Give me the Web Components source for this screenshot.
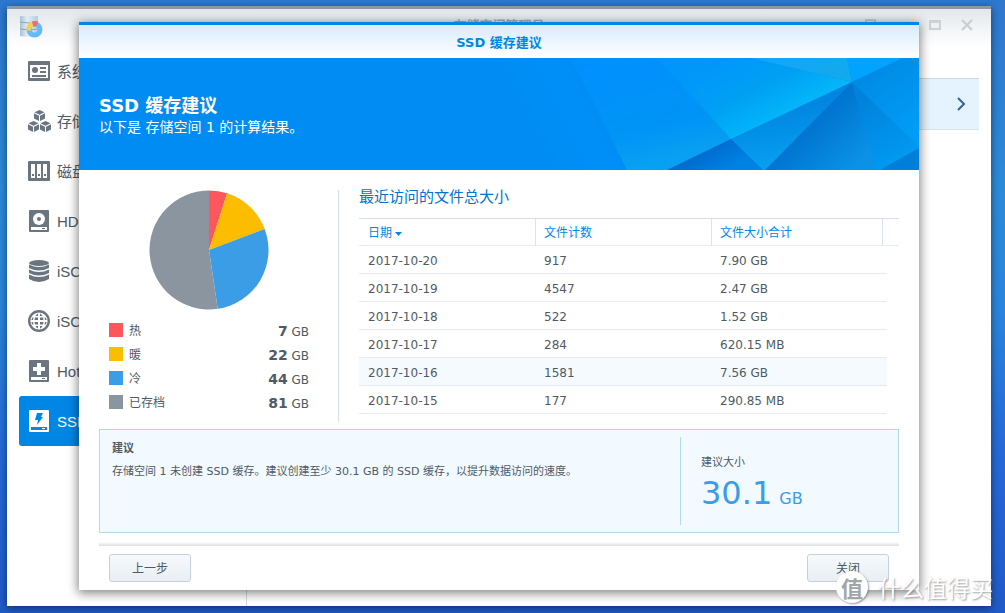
<!DOCTYPE html>
<html lang="zh-CN">
<head>
<meta charset="utf-8">
<title>存储空间管理员</title>
<style>
  html { height: 100%; }
  body {
    margin: 0;
    min-height: 100%;
    display: grid;
    font: 12px/20px "DejaVu Sans", "Noto Sans CJK SC", sans-serif;
    color: #505a64;
  }
</style>
</head>
<body>
<dsm-desktop>
  <dsm-window heading="存储空间管理员">
    <dsm-nav slot="nav">
      <dsm-nav-item icon="overview">系统</dsm-nav-item>
      <dsm-nav-item icon="volume">存储</dsm-nav-item>
      <dsm-nav-item icon="raid">磁盘</dsm-nav-item>
      <dsm-nav-item icon="hdd">HDD</dsm-nav-item>
      <dsm-nav-item icon="lun">iSCSI</dsm-nav-item>
      <dsm-nav-item icon="target">iSCSI</dsm-nav-item>
      <dsm-nav-item icon="spare">Hot</dsm-nav-item>
      <dsm-nav-item icon="cache" active>SSD</dsm-nav-item>
    </dsm-nav>
    <dsm-dialog slot="dialog" heading="SSD 缓存建议">
      <dsm-banner heading="SSD 缓存建议">以下是 存储空间 1 的计算结果。</dsm-banner>
      <usage-summary></usage-summary>
      <cache-advice heading="建议" label="建议大小" value="30.1" unit="GB">存储空间 1 未创建 SSD 缓存。建议创建至少 30.1 GB 的 SSD 缓存，以提升数据访问的速度。</cache-advice>
      <dsm-button slot="actions">上一步</dsm-button>
      <dsm-button slot="actions">关闭</dsm-button>
    </dsm-dialog>
  </dsm-window>
  <site-mark slot="mark"></site-mark>
</dsm-desktop>

<script>
const define = (name, render) => customElements.define(name, class extends HTMLElement {
  constructor() {
    super();
    this.attachShadow({ mode: 'open' });
  }
  connectedCallback() {
    if (this.shadowRoot.childNodes.length) return;
    const t = document.createElement('template');
    t.innerHTML = render(this);
    this.shadowRoot.append(t.content.cloneNode(true));
  }
});

define('dsm-desktop', () => `
  <style>
    :host {
      display: grid;
      position: relative;
      box-sizing: border-box;
      padding: 6px 14px 7px 7px;
      background: linear-gradient(180deg, #2f78cf 0%, #2c8bd9 30%, #2a86dc 50%, #2569d8 75%, #1f5bc9 100%);
    }
  </style>
  <slot></slot><slot name="mark"></slot>`);

define('dsm-window', el => `
  <style>
    :host {
      display: grid;
      background: #fff;
      box-shadow: 0 2px 8px rgba(0, 0, 0, .5);
    }
    .app, ::slotted([slot=dialog]) { grid-area: 1 / 1; }
    .app { display: grid; grid-template-rows: auto 1fr; min-width: 0; }
    header {
      display: grid;
      grid-template-columns: 1fr auto 1fr;
      box-sizing: border-box;
      height: 40px;
      padding: 0 12px;
      border-top: 3px solid #8b98a5;
      background: linear-gradient(#e3e7eb, #fff);
      align-items: center;
    }
    h1 { margin: 0; padding-bottom: 4px; font-size: 13px; line-height: 20px; color: #a9afb5; font-weight: bold; }
    .controls { display: flex; justify-content: end; gap: 8px; padding-bottom: 6px; }
    .controls button { width: 24px; height: 24px; padding: 0; border: 0; background: none; display: grid; place-items: center; }
    .body { display: grid; grid-template-columns: 240px 1fr; }
    nav { border-right: 1px solid #d5d8db; }
    main { padding: 32px 12px 0 20px; }
    .volume {
      display: flex; width: 100%; height: 52px; box-sizing: border-box;
      align-items: center; justify-content: flex-end; padding: 0 12px 0 0;
      background: #e5f3fe; border: 0; border-top: 1px solid #c8d8e4; border-bottom: 1px solid #d6e4ee;
    }
    svg { display: block; }
  </style>
  <div class="app">
    <header>
      <svg width="24" height="24" viewBox="0 0 24 24" aria-hidden="true">
        <defs><linearGradient id="d"><stop stop-color="#a8c2d4"/><stop offset=".4" stop-color="#e2edf4"/><stop offset="1" stop-color="#b6cad8"/></linearGradient></defs>
        <path d="M1 0h18v19q-9 3-18 1z" fill="url(#d)"/>
        <path d="M1 6q9 2 18 0M1 13q9 2 18 0" stroke="#8fa5b5" fill="none"/>
        <circle cx="15.500" cy="13.500" r="5.500" fill="none" stroke="#62bdf6" stroke-width="5"/>
        <path d="M7.500 14.500A8 8 0 0 1 13 5.500l1.500 5a3 3 0 0 0-2.500 4z" fill="#f8cf55"/>
        <path d="M13 5.500a8 8 0 0 1 6 0l-2 5a4 4 0 0 0-2.500 0z" fill="#ef6a6f"/>
      </svg>
      <h1>${el.getAttribute('heading')}</h1>
      <div class="controls">
        <button aria-label="帮助"><svg width="12" height="12" fill="none" stroke="#c8cccf" stroke-width="2"><path d="M1 4V1h9v4H6v3M6 10v2"/></svg></button>
        <button aria-label="最小化"><svg width="12" height="12"><path d="M0 9h12v2H0z" fill="#c8cccf"/></svg></button>
        <button aria-label="最大化"><svg width="12" height="12"><path d="M0 1h12v10H0z" fill="#cdd1d4"/><path d="M2 4h8v5H2z" fill="#eef0f2"/></svg></button>
        <button aria-label="关闭窗口"><svg width="12" height="12" stroke="#c8cccf" stroke-width="2"><path d="M1 1l10 10M11 1L1 11"/></svg></button>
      </div>
    </header>
    <div class="body">
      <nav><slot name="nav"></slot></nav>
      <main><button class="volume" aria-label="展开"><svg width="12" height="14" fill="none" stroke="#35639a" stroke-width="2"><path d="M3 1l6 6-6 6"/></svg></button></main>
    </div>
  </div>
  <slot name="dialog"></slot>`);

define('dsm-nav', () => `
  <style>:host { display: grid; padding: 0 12px; }</style><slot></slot>`);

const icons = {
  overview: '<path fill="currentColor" fill-rule="evenodd" d="M1 1h20q1 0 1 1v18q0 1-1 1H1q-1 0-1-1V2q0-1 1-1zm1 4v13h18V5z"/><g fill="currentColor"><circle cx="7" cy="10" r="3"/><path d="M12 7h6v2h-6zM12 11h6v2h-6zM4 15h14v2H4z"/></g>',
  volume: '<g fill="currentColor"><path d="M11.500 0l5 2.300-5 2.400-5-2.400zM6 3.300l5 2.400V11l-5-2.500zM17 3.300l-5 2.400V11l5-2.500z"/><path d="M5.500 11l5 2.300-5 2.400-5-2.400zM0 14.300l5 2.400V22l-5-2.500zM11 14.300l-5 2.400V22l5-2.500z"/><path d="M17.500 11l5 2.300-5 2.400-5-2.400zM12 14.300l5 2.400V22l-5-2.500zM23 14.300l-5 2.400V22l5-2.500z"/></g>',
  raid: '<path fill="currentColor" d="M1 1h20q1 0 1 1v18q0 1-1 1H1q-1 0-1-1V2q0-1 1-1z"/><path fill="#fff" d="M3 4h4v14H3zM9 4h4v14H9zM15 4h4v14h-4z"/><path fill="currentColor" d="M4 14h2v2H4zM10 14h2v2h-2zM16 14h2v2h-2z"/>',
  hdd: '<path fill="currentColor" d="M2 0h18q1 0 1 1v20q0 1-1 1H2q-1 0-1-1V1q0-1 1-1z"/><circle cx="11" cy="9" r="6" fill="#fff"/><circle cx="11" cy="9" r="2" fill="currentColor"/><path fill="#fff" d="M3 17h16v3H3z"/><path fill="currentColor" d="M14 18h3v1h-3z"/>',
  lun: '<g fill="currentColor"><ellipse cx="11" cy="3" rx="10" ry="3"/><path d="M1 4.500q10 5 20 0V8q-10 5-20 0zM1 9.500q10 5 20 0V13q-10 5-20 0zM1 14.500q10 5 20 0V19q-10 6-20 0z"/></g>',
  target: '<circle cx="11" cy="11" r="9.800" fill="none" stroke="currentColor" stroke-width="2.400"/><circle cx="11" cy="11" r="8" fill="#fff"/><g fill="currentColor"><path d="M10 3.500V6H7.500Q8.500 4 10 3.500zM12 3.500V6h2.500Q13.500 4 12 3.500zM10 18.500V16H7.500q1 2 2.500 2.500zM12 18.500V16h2.500q-1 2-2.500 2.500zM7 7.500h3V10H6.500zM12 7.500h3l.5 2.500H12zM6.500 12H10v2.500H7zM12 12h3.500l-.5 2.500h-3zM3.500 10q0-1.500.8-2.500h1.200L5 10zM18.500 10q0-1.500-.8-2.500h-1.200L17 10zM3.500 12q0 1.500.8 2.500h1.200L5 12zM18.500 12q0 1.500-.8 2.500h-1.200L17 12z"/></g>',
  spare: '<path fill="currentColor" d="M2 0h18q1 0 1 1v20q0 1-1 1H2q-1 0-1-1V1q0-1 1-1z"/><path fill="#fff" d="M9 3h4v4h4v4h-4v4H9v-4H5V7h4zM3 17h16v3H3z"/><path fill="currentColor" d="M14 18h3v1h-3z"/>',
  cache: '<path fill="#fff" d="M2 0h18q1 0 1 1v20q0 1-1 1H2q-1 0-1-1V1q0-1 1-1z"/><path fill="#0086e5" d="M9 3h6l-2 4h2l-6 8 1-5H7zM3 17h16v3H3z"/><path fill="#fff" d="M14 18h3v1h-3z"/>'
};
define('dsm-nav-item', el => `
  <style>
    :host { display: block; }
    a {
      display: flex; align-items: center; gap: 7px; height: 50px; padding: 0 9px;
      font: 15px/20px "Liberation Sans", "Noto Sans CJK SC", sans-serif;
      color: #505a64; text-decoration: none; border-radius: 3px; white-space: nowrap;
    }
    svg { color: #6b7580; flex: none; overflow: visible; }
    span { padding-top: 2px; }
    :host([active]) a { background: #0086e5; color: #fff; }
  </style>
  <a href="#${el.getAttribute('icon')}"><svg width="22" height="22" viewBox="0 0 22 22" aria-hidden="true">${icons[el.getAttribute('icon')]}</svg><span><slot></slot></span></a>`);

define('dsm-dialog', el => `
  <style>
    :host {
      display: block;
      place-self: center;
      width: calc(100% - 144px);
      background: #fff;
      z-index: 1;
      box-shadow: 0 2px 10px 1px rgba(0, 0, 0, .5);
    }
    header {
      box-sizing: border-box; height: 36px; border-top: 3px solid #0086e5;
      background: linear-gradient(#d8ebfc, #fff);
      display: grid; place-items: center;
    }
    h2 { margin: 0; padding-top: 2px; font-size: 13px; line-height: 20px; color: #0086e5; }
    footer {
      display: flex; justify-content: space-between; margin: 8px 20px 0; padding: 13px 10px 8px;
      background: linear-gradient(#fff, #dcdddf) 0 1px / 100% 4px no-repeat;
    }
  </style>
  <header><h2>${el.getAttribute('heading')}</h2></header>
  <slot></slot>
  <footer><slot name="actions"></slot></footer>`);

define('dsm-banner', el => `
  <style>
    :host {
      display: grid; grid-template-columns: 1fr 420px; height: 112px; overflow: hidden;
      background: #008cf2; color: #fff;
    }
    .text { padding: 37px 0 0 20px; white-space: nowrap; }
    h3 { margin: 0; font-size: 18px; line-height: 21px; }
    p { margin: 0; font-size: 14px; line-height: 22px; }
    svg { display: block; }
  </style>
  <div class="text"><h3>${el.getAttribute('heading')}</h3><p><slot></slot></p></div>
  <svg width="420" height="112" viewBox="0 0 420 112" aria-hidden="true">
    <defs>
      <linearGradient id="a" gradientUnits="userSpaceOnUse" x1="0" y1="0" x2="92" y2="-46"><stop stop-color="#008cf2"/><stop offset=".2" stop-color="#008ef6"/><stop offset=".5" stop-color="#008ff8"/><stop offset="1" stop-color="#0088ec"/></linearGradient>
      <linearGradient id="b" x2=".3" y2="1"><stop stop-color="#0090ff"/><stop offset=".7" stop-color="#0094f6"/><stop offset="1" stop-color="#08a0f2"/></linearGradient>
      <linearGradient id="c" gradientUnits="userSpaceOnUse" x1="220" y1="0" x2="262" y2="80"><stop stop-color="#0096fa"/><stop offset=".5" stop-color="#00a0f4"/><stop offset="1" stop-color="#04bcfa"/></linearGradient>
      <linearGradient id="e"><stop stop-color="#14a4fc"/><stop offset="1" stop-color="#12aaec"/></linearGradient>
      <linearGradient id="f" x2=".6" y2="1"><stop stop-color="#0086e0"/><stop offset="1" stop-color="#009cf6"/></linearGradient>
      <linearGradient id="g" gradientUnits="userSpaceOnUse" x1="280" y1="50" x2="290" y2="112"><stop stop-color="#0086e2"/><stop offset="1" stop-color="#08a2f2"/></linearGradient>
      <linearGradient id="h" gradientUnits="userSpaceOnUse" x1="215" y1="88" x2="230" y2="112"><stop stop-color="#006cd0"/><stop offset="1" stop-color="#0082e4"/></linearGradient>
      <linearGradient id="i" gradientUnits="userSpaceOnUse" x1="310" y1="68" x2="352" y2="112"><stop stop-color="#0074d0"/><stop offset="1" stop-color="#0a92e6"/></linearGradient>
      <linearGradient id="j" gradientUnits="userSpaceOnUse" x1="360" y1="40" x2="400" y2="112"><stop stop-color="#0082dc"/><stop offset="1" stop-color="#009cf4"/></linearGradient>
    </defs>
    <path d="M0 0h72l56 112H0z" fill="url(#a)"/>
    <path d="M72 0h88l72 81-64 31h-40z" fill="url(#b)"/>
    <path d="M158 0h94l101 24-121 57z" fill="url(#c)"/>
    <path d="M252 0h96l5 24z" fill="url(#e)"/>
    <path d="M348 0h56l-51 24z" fill="#00a4fc"/>
    <path d="M404 0h16v89l-67-65z" fill="url(#f)"/>
    <path d="M353 24L232 81l32 31h3z" fill="url(#g)"/>
    <path d="M168 112l64-31 32 31z" fill="url(#h)"/>
    <path d="M353 24l-87 88h111z" fill="url(#i)"/>
    <path d="M353 24l67 65v23h-43z" fill="url(#j)"/>
    <path d="M420 90l-39 22h39z" fill="#007fd8"/>
  </svg>`);

// name, rounded size, colour, exact size
const slices = [
  ['热', 7, '#fd565d', 7.6], ['暖', 22, '#fcbc00', 22], ['冷', 44, '#3a9de6', 43.7], ['已存档', 81, '#8b959f', 80.5]
];
define('pie-chart', () => {
  const total = slices.reduce((s, r) => s + r[3], 0);
  let at = 0;
  const pt = v => {
    const a = v / total * 2 * Math.PI;
    return (60 + 59.5 * Math.sin(a)).toFixed(2) + ' ' + (60 - 59.5 * Math.cos(a)).toFixed(2);
  };
  const paths = slices.map(([, , c, v]) => {
    const from = pt(at); at += v;
    return `<path d="M60 60L${from}A59.5 59.5 0 ${v / total > .5 ? 1 : 0} 1 ${pt(at)}z" fill="${c}"/>`;
  }).join('');
  return `<style>:host { display: grid; justify-content: center; } svg { display: block; }</style>
    <svg width="120" height="120" role="img" aria-label="文件使用分布">${paths}</svg>`;
});

define('pie-legend', () => `
  <style>
    :host { display: block; padding: 8px 10px 0; }
    dl { margin: 0; }
    div { display: grid; grid-template-columns: 14px 1fr auto; gap: 6px; align-items: center; height: 24px; }
    i { width: 14px; height: 14px; }
    dt, dd { margin: 0; padding-top: 2px; }
    b { font-size: 14px; }
  </style>
  <dl>${slices.map(([n, v, c]) => `<div><i style="background:${c}"></i><dt>${n}</dt><dd><b>${v}</b> GB</dd></div>`).join('')}</dl>`);

const rows = [
  ['2017-10-20', '917', '7.90 GB'], ['2017-10-19', '4547', '2.47 GB'], ['2017-10-18', '522', '1.52 GB'],
  ['2017-10-17', '284', '620.15 MB'], ['2017-10-16', '1581', '7.56 GB'], ['2017-10-15', '177', '290.85 MB']
];
define('file-table', () => `
  <style>
    :host { display: block; }
    h3 { margin: 0; font-size: 15px; line-height: 14px; padding-bottom: 14px; font-weight: normal; color: #0072d0; }
    table { width: 100%; border-collapse: separate; border-spacing: 0; table-layout: fixed; }
    th, td { box-sizing: border-box; height: 28px; padding: 2px 9px 0; line-height: 20px; text-align: left; font-weight: normal; border-bottom: 1px solid #e8ecf0; }
    .gutter { width: 12px; padding: 0; }
    th { color: #0086e5; border-top: 1px solid #d5e0ec; position: relative; }
    th:nth-child(2), th:nth-child(3) { border-left: 1px solid #dbe4f0; padding-left: 8px; }
    th:nth-child(3)::after { content: ""; position: absolute; right: 4px; top: 0; bottom: 0; border-right: 1px solid #dbe4f0; }
    td.gutter { border: 0; }
    tr.hover td:not(.gutter) { background: #f4faff; }
    svg { margin-left: 3px; vertical-align: middle; }
  </style>
  <h3>最近访问的文件总大小</h3>
  <table>
    <thead><tr><th>日期<svg width="7" height="4" aria-hidden="true"><path d="M0 0h7L3.500 4z" fill="#0086e5"/></svg></th><th>文件计数</th><th>文件大小合计</th><th class="gutter"></th></tr></thead>
    <tbody>${rows.map((r, i) => `<tr${i === 4 ? ' class="hover"' : ''}>${r.map(c => `<td>${c}</td>`).join('')}<td class="gutter"></td></tr>`).join('')}</tbody>
  </table>`);

define('usage-summary', () => `
  <style>
    :host { display: grid; grid-template-columns: 240px 1fr; gap: 20px; padding: 20px 20px 7px; }
    section { box-sizing: border-box; height: 232px; padding-right: 19px; border-right: 1px solid #d8e0ec; }
  </style>
  <section><pie-chart></pie-chart><pie-legend></pie-legend></section>
  <file-table></file-table>`);

define('cache-advice', el => `
  <style>
    :host {
      display: grid; grid-template-columns: 1fr 218px; box-sizing: border-box; min-height: 104px;
      margin: 0 20px; padding: 7px 0; border: 1px solid #b4d8ee; background: #f2f9ff;
      font-size: 11px;
    }
    .note { padding: 1px 12px 0; }
    h4 { margin: 0; font-size: 11px; line-height: 22px; }
    p { margin: 0; line-height: 24px; }
    .size { border-left: 1px solid #b4d8ee; padding: 16px 20px 0; }
    .value { display: flex; align-items: baseline; gap: 7px; font-size: 16px; line-height: 40px; color: #3a9de6; }
    .value span { font-size: 32px; }
  </style>
  <div class="note"><h4>${el.getAttribute('heading')}</h4><p><slot></slot></p></div>
  <div class="size"><div>${el.getAttribute('label')}</div><div class="value"><span>${el.getAttribute('value')}</span> ${el.getAttribute('unit')}</div></div>`);

define('dsm-button', () => `
  <style>
    :host { display: block; }
    button {
      display: block; width: 82px; height: 28px; padding: 2px 0 0; font: inherit; color: #505a64;
      border: 1px solid #c4d0da; border-radius: 3px; background: linear-gradient(#f6fafd, #e8eef3);
    }
  </style>
  <button><slot></slot></button>`);

define('site-mark', () => `
  <style>
    :host {
      position: absolute; right: 12px; bottom: 10px; z-index: 2;
      display: flex; align-items: center; gap: 10px; color: #fff; pointer-events: none;
      font: 23px/32px "Noto Sans CJK SC", sans-serif;
      text-shadow: 1px 1px 2px rgba(110, 110, 110, .7);
    }
    .seal {
      width: 32px; height: 32px; border-radius: 50%; background: #fff; color: #a2a5a8;
      font-size: 22px; font-weight: bold; text-align: center; text-shadow: none;
      box-shadow: 1px 1px 2px rgba(90, 90, 90, .6);
    }
  </style>
  <span class="seal">值</span><span>什么值得买</span>`);
</script>
</body>
</html>
